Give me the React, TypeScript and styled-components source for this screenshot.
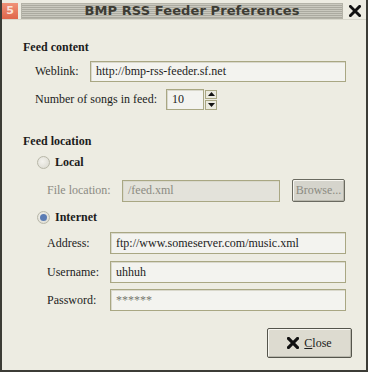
import React from 'react';
import styled, { createGlobalStyle } from 'styled-components';

const GlobalStyle = createGlobalStyle`
  html, body {
    margin: 0;
    padding: 0;
    background: #edece2;
  }
`;

const Window = styled.div`
  width: 368px;
  height: 372px;
  box-sizing: border-box;
  display: flex;
  flex-direction: column;
  background: #edece2;
  border-left: 2px solid #3c3c36;
  border-right: 2px solid #3c3c36;
  border-bottom: 2px solid #3c3c36;
  font-family: 'Liberation Serif', serif;
  font-size: 12px;
  color: #1c1c1c;
`;

const TitleBar = styled.div`
  height: 20px;
  display: flex;
  align-items: center;
  gap: 3px;
  padding: 2px 2px 0 0;
  box-sizing: border-box;
  border-bottom: 1px solid #d8d7cc;
`;

const AppIcon = styled.div`
  width: 16px;
  height: 16px;
  background: linear-gradient(#f09278, #e0664a);
  color: #fbe2d8;
  font: bold 11px 'DejaVu Sans', sans-serif;
  display: flex;
  align-items: center;
  justify-content: center;
`;

const Stripes = styled.div`
  flex: 1;
  height: 16px;
  display: flex;
  align-items: center;
  justify-content: center;
  padding-left: 20px;
  border: 1px solid #b4b3a8;
  box-sizing: border-box;
  background: repeating-linear-gradient(
    to bottom,
    #cac9bf 0px,
    #cac9bf 1px,
    #abaaa0 1px,
    #abaaa0 2px
  );
  font: bold 13px 'DejaVu Sans', sans-serif;
  color: #3d3c34;
  letter-spacing: 0.1px;
`;

const CloseX = styled.div`
  width: 18px;
  height: 16px;
  display: flex;
  align-items: center;
  justify-content: center;
`;

const Body = styled.div`
  flex: 1;
  display: flex;
  flex-direction: column;
  padding: 19px 20px 0 21px;
`;

const Heading = styled.div<{ $top?: number }>`
  font-weight: bold;
  font-size: 12px;
  line-height: 16px;
  margin-top: ${(p) => p.$top ?? 0}px;
`;

const Row = styled.div<{ $indent: number; $top: number }>`
  display: flex;
  align-items: center;
  margin-left: ${(p) => p.$indent}px;
  margin-top: ${(p) => p.$top}px;
`;

const Label = styled.div<{ $width: number; $disabled?: boolean }>`
  width: ${(p) => p.$width}px;
  flex-shrink: 0;
  color: ${(p) => (p.$disabled ? '#8c8b82' : '#1c1c1c')};
`;

const Entry = styled.div<{
  $width?: number;
  $height?: number;
  $disabled?: boolean;
  $muted?: boolean;
}>`
  ${(p) => (p.$width ? `width: ${p.$width}px;` : 'flex: 1;')}
  height: ${(p) => p.$height ?? 22}px;
  box-sizing: border-box;
  display: flex;
  align-items: center;
  padding-left: 5px;
  border: 1px solid #a9a783;
  box-shadow: inset 1px 1px 0 #d9d8cc;
  background: ${(p) => (p.$disabled ? '#e3e2da' : '#f3f3ef')};
  color: ${(p) => (p.$disabled ? '#8c8b82' : p.$muted ? '#777770' : '#1c1c1c')};
  font-size: 12px;
`;

const SpinArrows = styled.div`
  width: 12px;
  height: 20px;
  margin-left: 1px;
  display: flex;
  flex-direction: column;
  gap: 1px;
`;

const ArrowBtn = styled.div`
  flex: 1;
  display: flex;
  align-items: center;
  justify-content: center;
  border: 1px solid #a9a783;
  background: #ebeadf;
`;

const Radio = styled.div<{ $checked?: boolean }>`
  width: 13px;
  height: 13px;
  box-sizing: border-box;
  border-radius: 50%;
  border: 1px solid #b8b7a8;
  background: radial-gradient(circle at 40% 40%, #f4f3ee, #d8d7cd);
  display: flex;
  align-items: center;
  justify-content: center;
  margin-right: 5px;
  &::after {
    content: '';
    display: ${(p) => (p.$checked ? 'block' : 'none')};
    width: 7px;
    height: 7px;
    border-radius: 50%;
    background: #5b7cb4;
  }
`;

const RadioLabel = styled.span`
  font-weight: bold;
`;

const Button = styled.div<{ $disabled?: boolean }>`
  box-sizing: border-box;
  display: flex;
  align-items: center;
  justify-content: center;
  gap: 5px;
  border: 1px solid ${(p) => (p.$disabled ? '#6a6a60' : '#55554c')};
  border-radius: 2px;
  box-shadow: inset 1px 1px 0 #f7f6f0, inset -1px -1px 0 #b9b8ad;
  background: ${(p) => (p.$disabled ? '#d5d4cc' : '#dddbd0')};
  color: ${(p) => (p.$disabled ? '#8c8b82' : '#1c1c1c')};
`;

const BrowseButton = styled(Button)`
  width: 53px;
  height: 23px;
  margin-left: 12px;
`;

const Footer = styled.div`
  display: flex;
  justify-content: flex-end;
  margin-top: 17px;
  margin-right: -6px;
`;

const CloseButton = styled(Button)`
  width: 85px;
  height: 30px;
`;

const Mnemonic = styled.span`
  text-decoration: underline;
`;

function XGlyph({ size, stroke }: { size: number; stroke: number }) {
  return (
    <svg width={size} height={size} viewBox="0 0 10 10">
      <path d="M1.2 1.2 L8.8 8.8 M8.8 1.2 L1.2 8.8" stroke="#111" strokeWidth={stroke} strokeLinecap="square" />
    </svg>
  );
}

function Triangle({ up }: { up?: boolean }) {
  return (
    <svg width="7" height="4" viewBox="0 0 7 4">
      <path d={up ? 'M0 4 L3.5 0 L7 4 Z' : 'M0 0 L3.5 4 L7 0 Z'} fill="#111" />
    </svg>
  );
}

export default function App() {
  return (
    <>
      <GlobalStyle />
      <Window>
        <TitleBar>
          <AppIcon>5</AppIcon>
          <Stripes>BMP RSS Feeder Preferences</Stripes>
          <CloseX>
            <XGlyph size={12} stroke={2.4} />
          </CloseX>
        </TitleBar>
        <Body>
          <Heading>Feed content</Heading>
          <Row $indent={12} $top={6}>
            <Label $width={55}>Weblink:</Label>
            <Entry $height={21}>http://bmp-rss-feeder.sf.net</Entry>
          </Row>
          <Row $indent={12} $top={7}>
            <Label $width={131}>Number of songs in feed:</Label>
            <Entry $width={38} $height={21}>10</Entry>
            <SpinArrows>
              <ArrowBtn>
                <Triangle up />
              </ArrowBtn>
              <ArrowBtn>
                <Triangle />
              </ArrowBtn>
            </SpinArrows>
          </Row>

          <Heading $top={23}>Feed location</Heading>
          <Row $indent={14} $top={6}>
            <Radio />
            <RadioLabel>Local</RadioLabel>
          </Row>
          <Row $indent={24} $top={9}>
            <Label $width={75} $disabled>
              File location:
            </Label>
            <Entry $width={158} $disabled>
              /feed.xml
            </Entry>
            <BrowseButton $disabled>Browse...</BrowseButton>
          </Row>
          <Row $indent={14} $top={8}>
            <Radio $checked />
            <RadioLabel>Internet</RadioLabel>
          </Row>
          <Row $indent={24} $top={7}>
            <Label $width={63}>Address:</Label>
            <Entry>ftp://www.someserver.com/music.xml</Entry>
          </Row>
          <Row $indent={24} $top={7}>
            <Label $width={63}>Username:</Label>
            <Entry>uhhuh</Entry>
          </Row>
          <Row $indent={24} $top={6}>
            <Label $width={63}>Password:</Label>
            <Entry $muted>******</Entry>
          </Row>
          <Footer>
            <CloseButton>
              <XGlyph size={12} stroke={2.6} />
              <span>
                <Mnemonic>C</Mnemonic>lose
              </span>
            </CloseButton>
          </Footer>
        </Body>
      </Window>
    </>
  );
}
